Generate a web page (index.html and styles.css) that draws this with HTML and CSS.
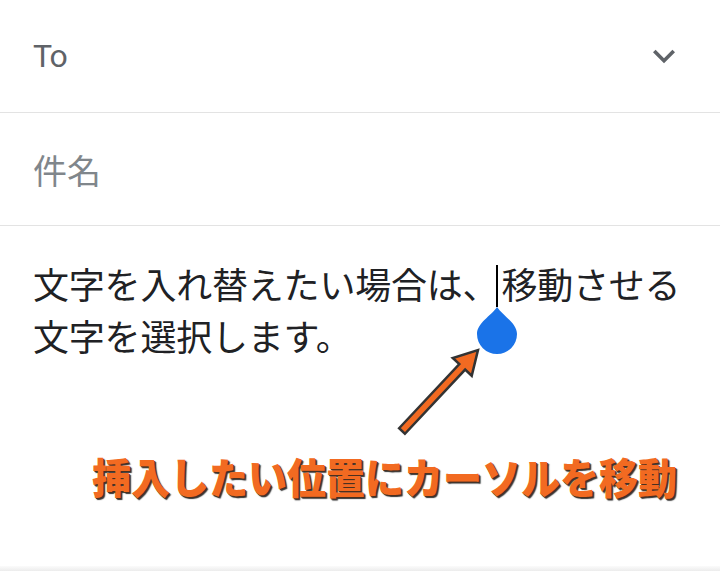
FILE: index.html
```html
<!DOCTYPE html>
<html lang="ja">
<head>
  <meta charset="UTF-8">
  <meta name="viewport" content="width=device-width, initial-scale=1.0">
  <title>作成</title>
  <link rel="stylesheet" href="styles.css">
</head>
<body>
  <div class="compose">
    <!-- Recipient row -->
    <div class="field field-to">
      <span class="label">To</span>
      <svg class="chevron" viewBox="0 0 24 24" width="44" height="44">
        <path d="M16.59 8.59L12 13.17 7.41 8.59 6 10l6 6 6-6z"/>
      </svg>
    </div>

    <!-- Subject row -->
    <div class="field field-subject">
      <span class="placeholder">件名</span>
    </div>

    <!-- Message body -->
    <div class="compose-body">
      <p class="message">文字を入れ替えたい場合は、<span class="caret"><svg class="handle" viewBox="0 0 40 47" width="40" height="47"><path d="M20 0 C26 9 40 16 40 27 A20 20 0 0 1 0 27 C0 16 14 9 20 0 Z"/></svg></span>移動させる<br>文字を選択します。</p>

      <svg class="arrow" width="720" height="340" viewBox="0 0 720 340">
        <g transform="translate(402 205) rotate(-46.8)">
          <polygon points="0,-4 88,-4 88,-13 111,0 88,13 88,4 0,4"/>
        </g>
      </svg>

      <div class="hint">挿入したい位置にカーソルを移動</div>
    </div>

    <div class="bottom-edge"></div>
  </div>
</body>
</html>
```

FILE: styles.css
```css
/* General Styles */
body {
  margin: 0;
  padding: 0;
  background-color: #fff;
  font-family: Roboto, "Noto Sans CJK JP", sans-serif;
}

.compose {
  width: 720px;
  height: 572px;
  overflow: hidden;
}

/* Header fields */
.field {
  height: 112px;
  display: flex;
  align-items: center;
  justify-content: space-between;
  padding: 0 34px 0 33px;
  border-bottom: 1px solid #e3e3e3;
}

.field-to .label {
  font-size: 32px;
  color: #5f6368;
  letter-spacing: -1px;
}

.chevron {
  fill: #5f6368;
}

.placeholder {
  font-family: "Noto Sans CJK JP", sans-serif;
  font-size: 34px;
  color: #80868b;
}

/* Message Body */
.compose-body {
  position: relative;
  height: 340px;
  padding: 31px 10px 0 33px;
  box-sizing: border-box;
}

.message {
  margin: 0;
  font-family: "Noto Sans CJK JP", sans-serif;
  font-size: 36px;
  line-height: 52px;
  letter-spacing: -0.2px;
  color: #202124;
  white-space: nowrap;
}

.caret {
  position: relative;
  display: inline-block;
  width: 0;
  height: 42px;
  margin: 0 3px 0 -2px;
  border-left: 2px solid #000;
  vertical-align: -8px;
}

.handle {
  position: absolute;
  top: 100%;
  left: -21px;
  fill: #1a73e8;
}

/* Annotation */
.arrow {
  position: absolute;
  left: 0;
  top: 0;
  pointer-events: none;
}

.arrow polygon {
  fill: #f26a21;
  stroke: #333;
  stroke-width: 2.5;
  stroke-linejoin: miter;
}

.hint {
  position: absolute;
  left: 92px;
  top: 229px;
  font-family: "Noto Sans CJK JP", sans-serif;
  font-weight: 900;
  font-size: 39px;
  line-height: 1;
  color: #f26a21;
  text-shadow: 1px 1px 0 #4a3020, 2px 2px 1px #333;
  white-space: nowrap;
  transform: scaleY(1.08);
  transform-origin: left top;
}

.bottom-edge {
  height: 5px;
  background: linear-gradient(#fbfbfb, #ececec);
}
```
